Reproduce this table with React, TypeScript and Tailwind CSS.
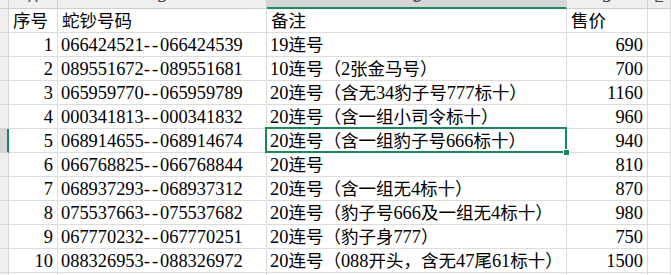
import React from "react";

type Row = { no: number; range: string; note: string; price: number };

const rows: Row[] = [
  { no: 1, range: "066424521--066424539", note: "19连号", price: 690 },
  { no: 2, range: "089551672--089551681", note: "10连号（2张金马号）", price: 700 },
  { no: 3, range: "065959770--065959789", note: "20连号（含无34豹子号777标十）", price: 1160 },
  { no: 4, range: "000341813--000341832", note: "20连号（含一组小司令标十）", price: 960 },
  { no: 5, range: "068914655--068914674", note: "20连号（含一组豹子号666标十）", price: 940 },
  { no: 6, range: "066768825--066768844", note: "20连号", price: 810 },
  { no: 7, range: "068937293--068937312", note: "20连号（含一组无4标十）", price: 870 },
  { no: 8, range: "075537663--075537682", note: "20连号（豹子号666及一组无4标十）", price: 980 },
  { no: 9, range: "067770232--067770251", note: "20连号（豹子身777）", price: 750 },
  { no: 10, range: "088326953--088326972", note: "20连号（088开头，含无47尾61标十）", price: 1500 },
];

const SELECTED = 5;

// digits sit a touch larger than the CJK glyphs, as in the sheet
function Mixed({ text }: { text: string }) {
  return (
    <>
      {text.split(/(\d+)/).map((part, i) =>
        /^\d+$/.test(part) ? (
          <span key={i} className="text-[18.4px]">
            {part}
          </span>
        ) : (
          <span key={i}>{part}</span>
        )
      )}
    </>
  );
}

function Range({ text }: { text: string }) {
  const [a, b] = text.split("--");
  return (
    <>
      {a}
      <span className="tracking-[2px]">--</span>
      {b}
    </>
  );
}

const cell = "flex items-end border-r border-b border-[#dcdcdc] pb-[1px] leading-[20px] whitespace-nowrap overflow-visible";

function ColHead({ label, active }: { label: string; active?: boolean }) {
  return (
    <div
      className={
        active
          ? "flex justify-center overflow-hidden border-r border-[#cfcfcf] border-b-2 border-b-[#1b8a5a] bg-[#d6d6d6]"
          : "flex justify-center overflow-hidden border-r border-b border-[#cfcfcf] bg-[#efefef]"
      }
    >
      <span className="-mt-[13px] font-['Liberation_Sans',sans-serif] text-[14px] leading-[20px] text-[#444]">{label}</span>
    </div>
  );
}

export default function App() {
  return (
    <div className="h-[275px] w-[671px] overflow-hidden bg-white font-['Liberation_Serif','Noto_Sans_CJK_SC',serif] text-[17.5px] text-black">
      <div className="grid grid-cols-[9px_49px_209px_300px_81px_1fr] grid-rows-[9px_repeat(12,24px)]">
        {/* column letters, mostly scrolled out of view */}
        <div className="border-r border-b border-[#cfcfcf] bg-[#efefef]" />
        <ColHead label="A" />
        <ColHead label="B" />
        <ColHead label="C" active />
        <ColHead label="D" />
        <ColHead label="E" />

        {/* header row */}
        <div className="border-r border-b border-[#d6d6d6] bg-[#efefef]" />
        <div className={`${cell} pl-[4px]`}>序号</div>
        <div className={`${cell} pl-[4px]`}>蛇钞号码</div>
        <div className={`${cell} pl-[4px]`}>备注</div>
        <div className={`${cell} pl-[4px]`}>售价</div>
        <div className={cell} />

        {rows.map((r) => {
          const sel = r.no === SELECTED;
          return (
            <React.Fragment key={r.no}>
              <div
                className={
                  sel
                    ? "border-r-2 border-b border-r-[#1b8a5a] border-b-[#d6d6d6] bg-[#d6d6d6]"
                    : "border-r border-b border-[#d6d6d6] bg-[#efefef]"
                }
              />
              <div className={`${cell} justify-end pr-[4px] text-[18.4px]`}>{r.no}</div>
              <div className={`${cell} pl-[3px] text-[18.4px]`}>
                <Range text={r.range} />
              </div>
              <div className={`${cell} relative pl-[3px]`}>
                <Mixed text={r.note} />
                {sel && (
                  <>
                    <div className="absolute -top-[2px] -left-[2px] right-[-1px] bottom-[-1px] z-10 border-2 border-[#1b8a5a]" />
                    <div className="absolute right-[-4px] bottom-[-4px] z-20 h-[7px] w-[7px] border border-white bg-[#1b8a5a]" />
                  </>
                )}
              </div>
              <div className={`${cell} justify-end pr-[4px] text-[18.4px]`}>{r.price}</div>
              <div className={cell} />
            </React.Fragment>
          );
        })}

        {/* next, empty row peeking in at the bottom */}
        <div className="border-r border-b border-[#d6d6d6] bg-[#efefef]" />
        <div className={cell} />
        <div className={cell} />
        <div className={cell} />
        <div className={cell} />
        <div className={cell} />
      </div>
    </div>
  );
}
